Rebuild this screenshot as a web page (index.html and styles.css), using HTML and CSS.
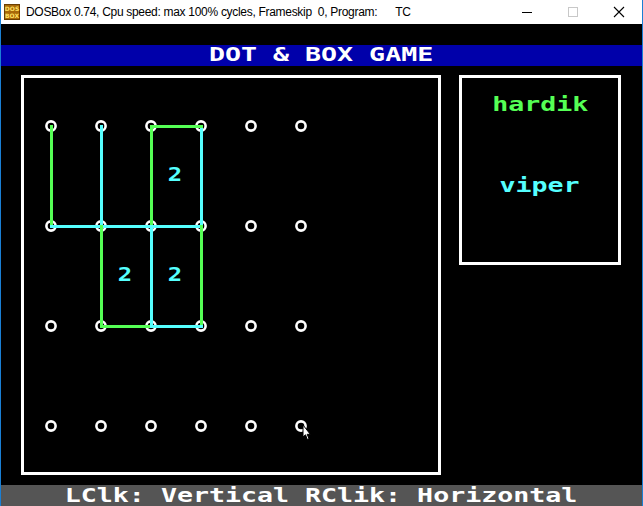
FILE: index.html
```html
<!DOCTYPE html>
<html>
<head>
<meta charset="utf-8">
<link rel="stylesheet" href="styles.css">
</head>
<body>
<div class="window">
  <div class="titlebar">
    <svg class="appicon" width="16" height="16" viewBox="0 0 16 16">
      <rect x="0" y="0" width="16" height="16" fill="#6b3f00"/>
      <rect x="1" y="1" width="14" height="14" fill="#a8690a"/>
      <text x="8" y="7" text-anchor="middle" font-family="DejaVu Sans" font-weight="bold" font-size="6" fill="#ffe060">DOS</text>
      <text x="8" y="14" text-anchor="middle" font-family="DejaVu Sans" font-weight="bold" font-size="6" fill="#ffe060">BOX</text>
    </svg>
    <span class="title">DOSBox 0.74, Cpu speed: max 100% cycles, Frameskip  0, Program:      TC</span>
    <div class="controls">
      <svg class="ctl" width="46" height="24" viewBox="0 0 46 24"><line x1="18" y1="12.5" x2="28" y2="12.5" stroke="#000" stroke-width="1"/></svg>
      <svg class="ctl" width="46" height="24" viewBox="0 0 46 24"><rect x="18.5" y="7.5" width="9" height="9" fill="none" stroke="#c8c8c8" stroke-width="1"/></svg>
      <svg class="ctl" width="46" height="24" viewBox="0 0 46 24"><path d="M18 7 L28 17 M28 7 L18 17" stroke="#000" stroke-width="1.1"/></svg>
    </div>
  </div>
  <div class="screen">
    <div class="header"><span class="dos">DOT &amp; BOX GAME</span></div>
    <div class="main">
      <div class="board">
        <svg class="grid" width="414" height="394" viewBox="24 78 414 394">
          <g class="dots" fill="none" stroke="#fff" stroke-width="2.6">
            <circle cx="51" cy="126" r="4.6"/><circle cx="101" cy="126" r="4.6"/><circle cx="151" cy="126" r="4.6"/><circle cx="201" cy="126" r="4.6"/><circle cx="251" cy="126" r="4.6"/><circle cx="301" cy="126" r="4.6"/>
            <circle cx="51" cy="226" r="4.6"/><circle cx="101" cy="226" r="4.6"/><circle cx="151" cy="226" r="4.6"/><circle cx="201" cy="226" r="4.6"/><circle cx="251" cy="226" r="4.6"/><circle cx="301" cy="226" r="4.6"/>
            <circle cx="51" cy="326" r="4.6"/><circle cx="101" cy="326" r="4.6"/><circle cx="151" cy="326" r="4.6"/><circle cx="201" cy="326" r="4.6"/><circle cx="251" cy="326" r="4.6"/><circle cx="301" cy="326" r="4.6"/>
            <circle cx="51" cy="426" r="4.6"/><circle cx="101" cy="426" r="4.6"/><circle cx="151" cy="426" r="4.6"/><circle cx="201" cy="426" r="4.6"/><circle cx="251" cy="426" r="4.6"/><circle cx="301" cy="426" r="4.6"/>
          </g>
          <g class="lines" stroke-width="3" stroke-linecap="square">
            <line x1="51" y1="126" x2="51" y2="226" stroke="#55ff55"/>
            <line x1="101" y1="126" x2="101" y2="226" stroke="#55ffff"/>
            <line x1="151" y1="126" x2="151" y2="226" stroke="#55ff55"/>
            <line x1="201" y1="126" x2="201" y2="226" stroke="#55ffff"/>
            <line x1="151" y1="126" x2="201" y2="126" stroke="#55ff55"/>
            <line x1="51" y1="226" x2="201" y2="226" stroke="#55ffff"/>
            <line x1="101" y1="226" x2="101" y2="326" stroke="#55ff55"/>
            <line x1="151" y1="226" x2="151" y2="326" stroke="#55ffff"/>
            <line x1="201" y1="226" x2="201" y2="326" stroke="#55ff55"/>
            <line x1="101" y1="326" x2="151" y2="326" stroke="#55ff55"/>
            <line x1="151" y1="326" x2="201" y2="326" stroke="#55ffff"/>
          </g>
          <g class="score" fill="#55ffff" text-anchor="middle">
            <text transform="translate(175 181) scale(1.26 1)">2</text>
            <text transform="translate(125 281) scale(1.26 1)">2</text>
            <text transform="translate(175 281) scale(1.26 1)">2</text>
          </g>
          <path d="M303 425 L303 437 L305.5 434.8 L307.3 439.5 L309 438.8 L307.2 434.3 L310.3 434.3 Z" fill="#fff" stroke="#000" stroke-width="1"/>
        </svg>
      </div>
      <div class="players">
        <div class="name p1"><span class="dos">hardik</span></div>
        <div class="name p2"><span class="dos">viper</span></div>
      </div>
    </div>
    <div class="footer"><span class="dos">LClk: Vertical RClik: Horizontal</span></div>
  </div>
</div>
</body>
</html>
```
FILE: styles.css
```css
* { box-sizing: border-box; }
html, body { margin: 0; padding: 0; background: #000; }
body { width: 643px; height: 506px; overflow: hidden; }

.window {
  width: 643px;
  height: 506px;
  border-left: 1px solid #1a7fd4;
  border-right: 1px solid #1a7fd4;
  display: flex;
  flex-direction: column;
  background: #000;
}

.titlebar {
  height: 24px;
  background: #fff;
  display: flex;
  align-items: center;
  padding-left: 3px;
  flex: none;
}
.appicon { flex: none; }
.title {
  font-family: "Liberation Sans", Arial, sans-serif;
  font-size: 12px;
  color: #000;
  white-space: pre;
  margin-left: 6px;
  letter-spacing: -0.3px;
}
.controls {
  margin-left: auto;
  display: flex;
  height: 24px;
}
.ctl { display: block; }

.screen {
  flex: 1;
  background: #000;
  display: flex;
  flex-direction: column;
  padding-top: 21px;
}

.dos {
  display: inline-block;
  font-family: "DejaVu Sans Mono", monospace;
  font-weight: bold;
  font-size: 19px;
  transform: scaleX(1.4);
  white-space: pre;
}

.header {
  height: 21px;
  line-height: 18px;
  background: #0000aa;
  color: #fff;
  text-align: center;
}

.main {
  display: flex;
  margin-top: 9px;
  padding-left: 20px;
  gap: 18px;
  align-items: flex-start;
}

.board {
  width: 420px;
  height: 400px;
  border: 3px solid #fff;
}
.grid { display: block; }
.lines { shape-rendering: crispEdges; }
.score text {
  font-family: "DejaVu Sans Mono", monospace;
  font-weight: bold;
  font-size: 19px;
}

.players {
  width: 162px;
  height: 190px;
  border: 3px solid #fff;
  padding-top: 18px;
  display: flex;
  flex-direction: column;
  align-items: center;
}
.name { line-height: 16px; height: 16px; }
.p1 { color: #55ff55; }
.p2 { color: #55ffff; margin-top: 65px; }

.footer {
  margin-top: 10px;
  height: 21px;
  line-height: 20px;
  background: #555;
  color: #fff;
  text-align: center;
}
```
